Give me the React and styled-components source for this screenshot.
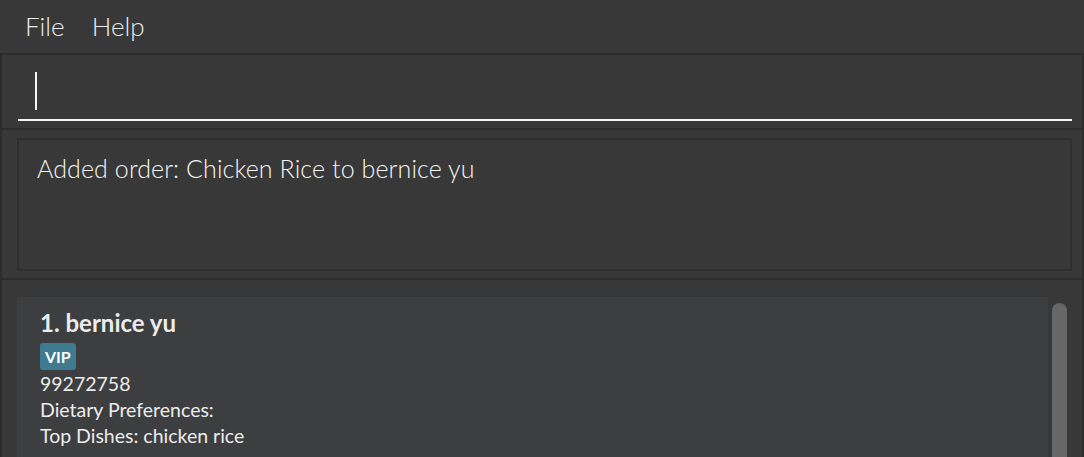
import React from "react";
import styled, { createGlobalStyle } from "styled-components";

const Global = createGlobalStyle`
  html, body { margin: 0; padding: 0; background: #383838; }
  body { font-family: "Lato", "Open Sans", sans-serif; }
  #root { height: 457px; overflow: hidden; }
`;

const Window = styled.div`
  width: 1084px;
  height: 457px;
  background: #383838;
  display: flex;
  flex-direction: column;
  overflow: hidden;
`;

const MenuBar = styled.div`
  height: 53px;
  flex: none;
  display: flex;
  align-items: center;
  padding-left: 25px;
  gap: 27px;
  background: #383838;
`;

const MenuItem = styled.span`
  font-family: "Lato", sans-serif;
  font-weight: 300;
  font-size: 26px;
  color: #ececec;
  margin-top: -2px;
`;

const Pane = styled.div`
  flex: none;
  border-top: 2px solid #2c2c2c;
  border-left: 2px solid #2c2c2c;
  border-right: 2px solid #2c2c2c;
  padding: ${(p) => p.$pad};
  background: #383838;
`;

const CommandField = styled.div`
  border-bottom: 2px solid #f2f2f2;
  padding: 17px 0 0 17px;
  box-sizing: border-box;
  height: 66px;
`;

const Caret = styled.div`
  width: 2px;
  height: 38px;
  background: #f4f4f4;
`;

const ResultBox = styled.div`
  height: 133px;
  box-sizing: border-box;
  border: 2px solid #2e2e2e;
  padding: 13px 18px;
  font-family: "Lato", sans-serif;
  font-weight: 300;
  font-size: 25px;
  letter-spacing: 0.1px;
  color: #f4f4f4;
`;

const ListPane = styled(Pane)`
  flex: 1;
  display: flex;
  min-height: 0;
`;

const Card = styled.div`
  flex: 1;
  background: #3c3e3f;
  padding: 11px 23px;
  display: flex;
  flex-direction: column;
  align-items: flex-start;
  color: #ececec;
`;

const Name = styled.div`
  font-family: "Lato", sans-serif;
  font-weight: 700;
  font-size: 24px;
  line-height: 30px;
`;

const Tag = styled.span`
  background: #3e7b91;
  color: #ffffff;
  font-family: "Lato", sans-serif;
  font-weight: 700;
  font-size: 16px;
  line-height: 27px;
  padding: 0 5px;
  border-radius: 3px;
  margin: 5px 0 1px;
`;

const Line = styled.div`
  font-family: "Lato", sans-serif;
  font-size: 19.5px;
  line-height: 26px;
`;

const ScrollTrack = styled.div`
  width: 34px;
  flex: none;
  padding: 6px 0 0 4px;
  box-sizing: border-box;
`;

const Thumb = styled.div`
  width: 15px;
  height: 300px;
  border-radius: 8px;
  background: #676767;
`;

export default function App() {
  return (
    <>
      <Global />
      <Window>
        <MenuBar>
          <MenuItem>File</MenuItem>
          <MenuItem>Help</MenuItem>
        </MenuBar>
        <Pane $pad="0 10px 7px 16px">
          <CommandField>
            <Caret />
          </CommandField>
        </Pane>
        <Pane $pad="8px 10px 7px 15px">
          <ResultBox>Added order: Chicken Rice to bernice yu</ResultBox>
        </Pane>
        <ListPane $pad="17px 0 0 15px">
          <Card>
            <Name>1. bernice yu</Name>
            <Tag>VIP</Tag>
            <Line>99272758</Line>
            <Line>Dietary Preferences:</Line>
            <Line>Top Dishes: chicken rice</Line>
          </Card>
          <ScrollTrack>
            <Thumb />
          </ScrollTrack>
        </ListPane>
      </Window>
    </>
  );
}
